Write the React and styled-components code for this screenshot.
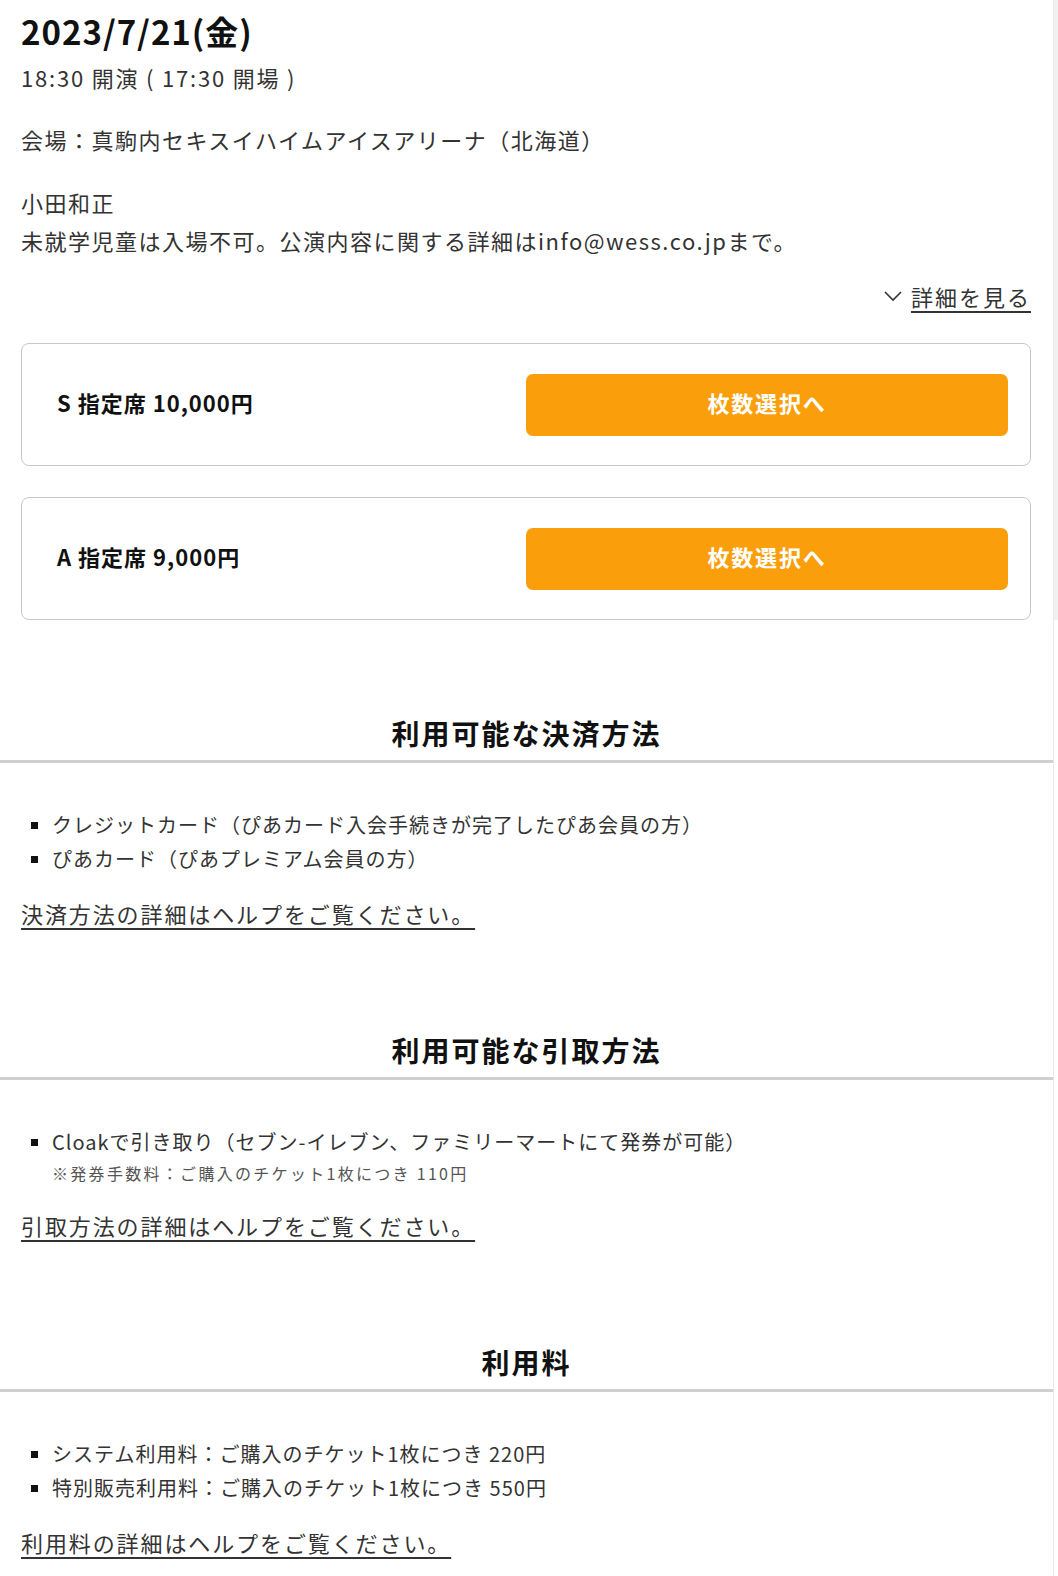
import styled, { createGlobalStyle } from "styled-components";

const GlobalStyle = createGlobalStyle`
  html, body {
    margin: 0;
    padding: 0;
    background: #fff;
  }
  body {
    font-family: "Noto Sans CJK JP", "Noto Sans", sans-serif;
    color: #333;
  }
`;

const Layout = styled.div`
  display: flex;
  width: 1058px;
  min-height: 1576px;
`;

const Page = styled.main`
  width: 1054px;
  padding: 12px 0 40px;
  box-sizing: border-box;
`;

const Rail = styled.div`
  width: 4px;
  background: linear-gradient(#f1f1f1 0, #f1f1f1 620px, #fff 620px);
  border-left: 1px solid #e8e8e8;
`;

const Inner = styled.div`
  padding: 0 22px 0 21px;
`;

const DateTitle = styled.h1`
  margin: 0;
  font-size: 33px;
  line-height: 38px;
  font-weight: 700;
  color: #111;
  letter-spacing: 1px;
`;

const Text = styled.p`
  margin: ${(p) => p.$mt || 0}px 0 0;
  font-size: 22px;
  line-height: 38px;
  letter-spacing: ${(p) => p.$ls || 1.5}px;
  color: #333;
`;

const MoreRow = styled.div`
  display: flex;
  justify-content: flex-end;
  margin-top: 18px;
`;

const MoreLink = styled.a`
  display: inline-flex;
  align-items: center;
  gap: 9px;
  font-size: 22px;
  line-height: 38px;
  color: #333;
  letter-spacing: 2px;
  text-decoration: none;
  cursor: pointer;

  span {
    text-decoration: underline;
    text-underline-offset: 5px;
  }
`;

const Card = styled.div`
  display: flex;
  align-items: center;
  margin-top: ${(p) => p.$mt}px;
  height: 123px;
  box-sizing: border-box;
  padding: 0 22px 0 35px;
  border: 1px solid #c8c8c8;
  border-radius: 8px;
`;

const SeatLabel = styled.div`
  flex: 1;
  padding-bottom: 6px;
  font-size: 22px;
  font-weight: 700;
  letter-spacing: 1px;
  color: #111;
`;

const SelectButton = styled.button`
  width: 482px;
  height: 62px;
  padding: 0 0 5px;
  border: none;
  border-radius: 7px;
  background: #fa9f0b;
  color: #fff;
  font-family: inherit;
  font-size: 22px;
  font-weight: 700;
  letter-spacing: 1.8px;
  cursor: pointer;
`;

const Section = styled.section`
  margin-top: ${(p) => p.$mt || 98}px;
`;

const SectionTitle = styled.h2`
  margin: 0;
  padding-bottom: 7px;
  border-bottom: 3px solid #cfcfcf;
  text-align: center;
  font-size: 28px;
  line-height: 40px;
  font-weight: 700;
  letter-spacing: 2px;
  color: #111;
`;

const List = styled.ul`
  list-style: none;
  margin: 45px 0 0;
  padding: 0 0 0 10px;
`;

const Item = styled.li`
  position: relative;
  padding-left: 21px;
  font-size: 20px;
  line-height: 34px;
  letter-spacing: 1px;
  color: #333;

  &::before {
    content: "";
    position: absolute;
    left: 0;
    top: 14px;
    width: 7px;
    height: 7px;
    background: #111;
  }
`;

const Note = styled.div`
  margin-top: -1px;
  font-size: 16px;
  line-height: 30px;
  letter-spacing: 2.3px;
  color: #555;
`;

const HelpLink = styled.a`
  display: inline-block;
  margin-top: 18px;
  font-size: 22px;
  line-height: 38px;
  letter-spacing: 1.9px;
  color: #333;
  text-decoration: underline;
  text-underline-offset: 5px;
  cursor: pointer;
`;

const Chevron = () => (
  <svg width="18" height="12" viewBox="0 0 18 12" fill="none">
    <path d="M1 2l8 8 8-8" stroke="#333" strokeWidth="1.6" />
  </svg>
);

const seats = [
  { label: "S 指定席 10,000円", mt: 28 },
  { label: "A 指定席 9,000円", mt: 31 },
];

const sections = [
  {
    title: "利用可能な決済方法",
    items: [
      { text: "クレジットカード（ぴあカード入会手続きが完了したぴあ会員の方）" },
      { text: "ぴあカード（ぴあプレミアム会員の方）" },
    ],
    link: "決済方法の詳細はヘルプをご覧ください。",
    mt: 93,
  },
  {
    title: "利用可能な引取方法",
    items: [
      {
        text: "Cloakで引き取り（セブン-イレブン、ファミリーマートにて発券が可能）",
        note: "※発券手数料：ご購入のチケット1枚につき 110円",
      },
    ],
    link: "引取方法の詳細はヘルプをご覧ください。",
  },
  {
    title: "利用料",
    items: [
      { text: "システム利用料：ご購入のチケット1枚につき 220円" },
      { text: "特別販売利用料：ご購入のチケット1枚につき 550円" },
    ],
    link: "利用料の詳細はヘルプをご覧ください。",
  },
];

const App = () => {
  return (
    <>
      <GlobalStyle />
      <Layout>
        <Page>
          <Inner>
            <DateTitle>2023/7/21(金)</DateTitle>
            <Text $mt={8} $ls={1.8}>
              18:30 開演 ( 17:30 開場 )
            </Text>
            <Text $mt={24}>
              会場：真駒内セキスイハイムアイスアリーナ（北海道）
            </Text>
            <Text $mt={25}>
              小田和正
              <br />
              未就学児童は入場不可。公演内容に関する詳細はinfo@wess.co.jpまで。
            </Text>
            <MoreRow>
              <MoreLink>
                <Chevron />
                <span>詳細を見る</span>
              </MoreLink>
            </MoreRow>
            {seats.map((seat) => (
              <Card key={seat.label} $mt={seat.mt}>
                <SeatLabel>{seat.label}</SeatLabel>
                <SelectButton>枚数選択へ</SelectButton>
              </Card>
            ))}
          </Inner>

          {sections.map((sec) => (
            <Section key={sec.title} $mt={sec.mt}>
              <SectionTitle>{sec.title}</SectionTitle>
              <Inner>
                <List>
                  {sec.items.map((it) => (
                    <Item key={it.text}>
                      {it.text}
                      {it.note && <Note>{it.note}</Note>}
                    </Item>
                  ))}
                </List>
                <HelpLink>{sec.link}</HelpLink>
              </Inner>
            </Section>
          ))}
        </Page>
        <Rail />
      </Layout>
    </>
  );
};

export default App;
